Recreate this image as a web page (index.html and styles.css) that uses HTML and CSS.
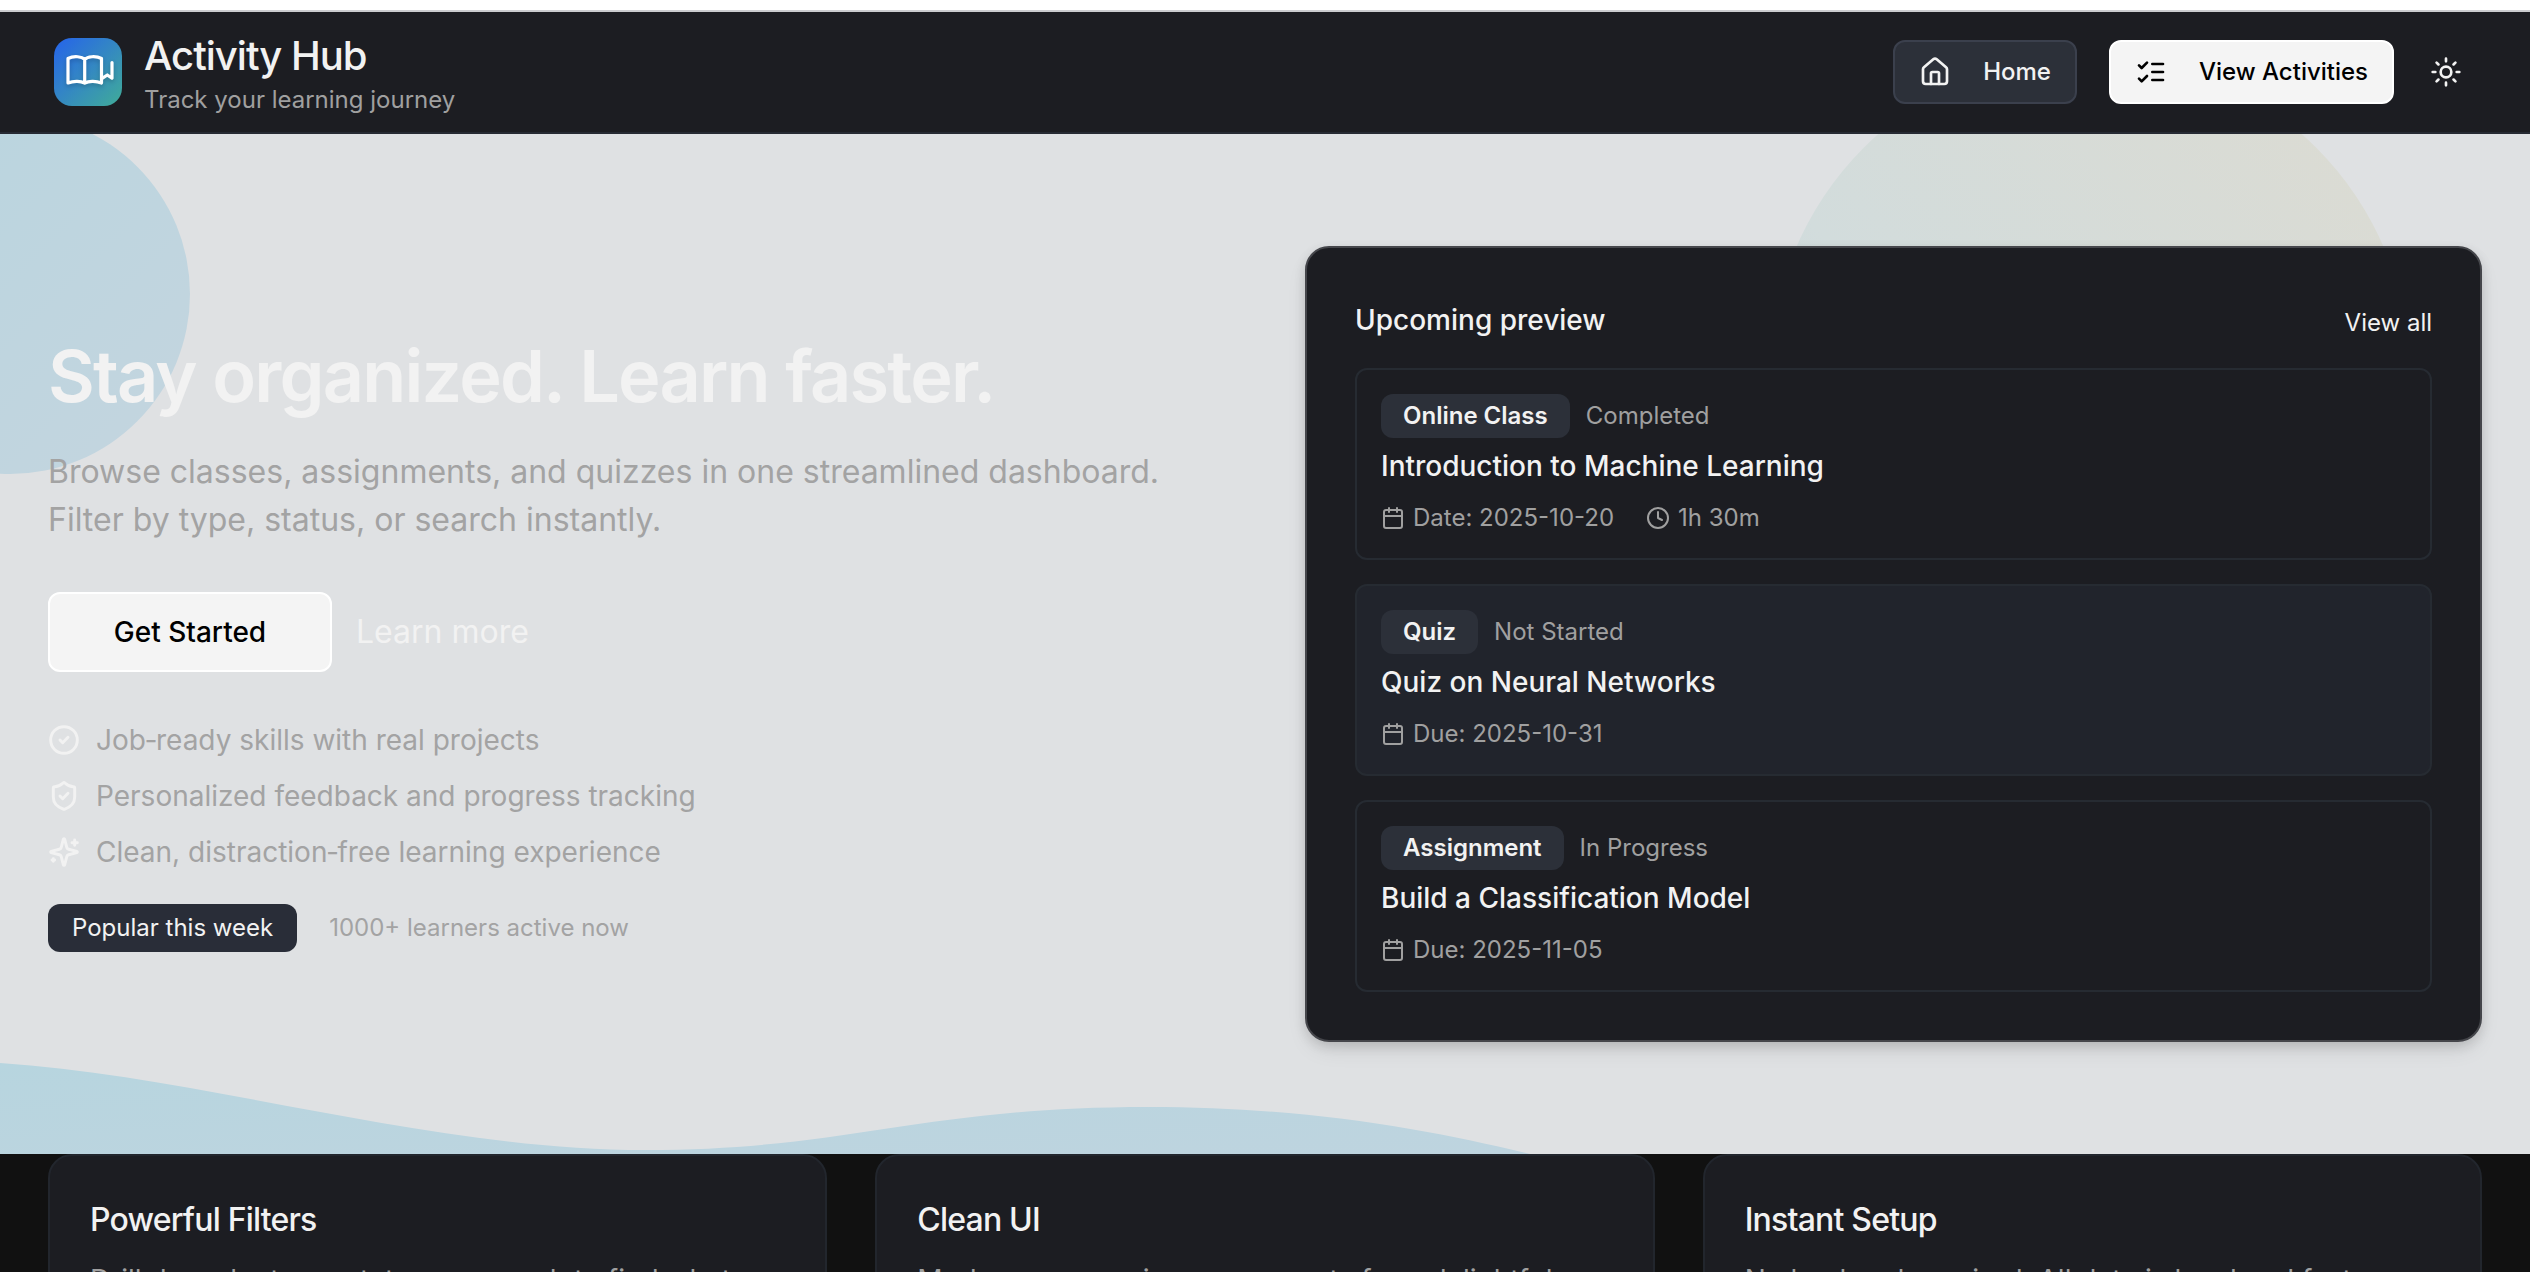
FILE: index.html
```html
<!DOCTYPE html>
<html lang="en">
<head>
<meta charset="utf-8">
<title>Activity Hub</title>
<link rel="stylesheet" href="styles.css">
</head>
<body>
<svg class="defs" width="0" height="0" aria-hidden="true">
  <symbol id="calendar" viewBox="0 0 24 24"><path d="M8 2v4M16 2v4"/><rect x="3" y="4" width="18" height="18" rx="2"/><path d="M3 10h18"/></symbol>
</svg>
<div class="page">
  <header class="topbar">
    <div class="brand">
      <div class="logo">
        <svg class="logo-icon" viewBox="0 0 68 68"><path d="M30.700 21.500C28 18.500 20 17.500 14 20.500V45C20 42.500 27 43 30.700 45.200C34.500 43 41.500 42.500 47.500 45V20.500C41.500 17.500 33.500 18.500 30.700 21.500V45"/><path d="M48.500 40.200L53.300 37L58 40.200V24.500"/></svg>
      </div>
      <div class="brand-text">
        <div class="brand-name">Activity Hub</div>
        <div class="brand-tag">Track your learning journey</div>
      </div>
    </div>
    <nav class="nav">
      <a class="btn btn-secondary"><svg class="icon" viewBox="0 0 24 24"><path d="M15 21v-8a1 1 0 0 0-1-1h-4a1 1 0 0 0-1 1v8"/><path d="M3 10a2 2 0 0 1 .709-1.528l7-5.999a2 2 0 0 1 2.582 0l7 5.999A2 2 0 0 1 21 10v9a2 2 0 0 1-2 2H5a2 2 0 0 1-2-2z"/></svg><span>Home</span></a>
      <a class="btn btn-primary"><svg class="icon" viewBox="0 0 24 24"><path d="m3 17 2 2 4-4"/><path d="m3 7 2 2 4-4"/><path d="M13 6h8"/><path d="M13 12h8"/><path d="M13 18h8"/></svg><span>View Activities</span></a>
      <a class="theme"><svg class="icon" viewBox="0 0 24 24"><circle cx="12" cy="12" r="4"/><path d="M12 2v2M12 20v2M4.930 4.930l1.410 1.410M17.660 17.660l1.410 1.410M2 12h2M20 12h2M6.340 17.660l-1.410 1.410M19.070 4.930l-1.410 1.410"/></svg></a>
    </nav>
  </header>

  <section class="hero">
    <svg class="hero-art" viewBox="0 0 2530 1020" preserveAspectRatio="none">
      <defs>
        <linearGradient id="blue" x1="0" y1="0" x2="1" y2="1"><stop offset="0" stop-color="#b8d5df"/><stop offset="1" stop-color="#c4d5df"/></linearGradient>
        <linearGradient id="sand" x1="0" y1="1" x2="1" y2="0"><stop offset="0" stop-color="#c5d6e2"/><stop offset=".4" stop-color="#d2dcdc"/><stop offset="1" stop-color="#dddbd1"/></linearGradient>
        <linearGradient id="wave" x1="0" y1="0" x2="1" y2="1"><stop offset="0" stop-color="#b7d5df"/><stop offset="1" stop-color="#bed4df"/></linearGradient>
      </defs>
      <circle cx="10" cy="160" r="180" fill="url(#blue)"/>
      <circle cx="2090" cy="240" r="320" fill="url(#sand)"/>
      <path d="M0 929C200 942 430 1016 645 1016C850 1016 920 973 1148 973C1310 973 1430 996 1530 1020H0Z" fill="url(#wave)"/>
    </svg>
    <div class="intro">
      <h1>Stay organized. Learn faster.</h1>
      <p class="lead">Browse classes, assignments, and quizzes in one streamlined dashboard.<br>Filter by type, status, or search instantly.</p>
      <div class="actions"><a class="start">Get Started</a><a class="more">Learn more</a></div>
      <ul class="points">
        <li><svg class="icon" viewBox="0 0 24 24"><circle cx="12" cy="12" r="10"/><path d="m9 12 2 2 4-4"/></svg>Job‑ready skills with real projects</li>
        <li><svg class="icon" viewBox="0 0 24 24"><path d="M20 13c0 5-3.500 7.500-7.660 8.950a1 1 0 0 1-.67-.01C7.500 20.500 4 18 4 13V6a1 1 0 0 1 1-1c2 0 4.500-1.200 6.240-2.720a1.170 1.170 0 0 1 1.520 0C14.510 3.810 17 5 19 5a1 1 0 0 1 1 1z"/><path d="m9 12 2 2 4-4"/></svg>Personalized feedback and progress tracking</li>
        <li><svg class="icon" viewBox="0 0 24 24"><path d="M9.937 15.500A2 2 0 0 0 8.500 14.063l-6.135-1.582a.5.5 0 0 1 0-.962L8.500 9.936A2 2 0 0 0 9.937 8.500l1.582-6.135a.5.5 0 0 1 .963 0L14.063 8.500A2 2 0 0 0 15.500 9.937l6.135 1.581a.5.5 0 0 1 0 .964L15.500 14.063a2 2 0 0 0-1.437 1.437l-1.582 6.135a.5.5 0 0 1-.963 0z"/><path d="M20 3v4M22 5h-4M4 17v2M5 18H3"/></svg>Clean, distraction‑free learning experience</li>
      </ul>
      <div class="popular"><span class="popular-tag">Popular this week</span><span>1000+ learners active now</span></div>
    </div>

    <div class="preview">
      <div class="preview-head"><h2>Upcoming preview</h2><a>View all</a></div>
      <div class="items">
        <article class="item">
          <div class="item-top"><span class="tag">Online Class</span><span>Completed</span></div>
          <h3>Introduction to Machine Learning</h3>
          <div class="meta"><span><svg class="icon"><use href="#calendar"/></svg>Date: 2025-10-20</span><span><svg class="icon" viewBox="0 0 24 24"><circle cx="12" cy="12" r="10"/><path d="M12 6v6l4 2"/></svg>1h 30m</span></div>
        </article>
        <article class="item item-active">
          <div class="item-top"><span class="tag">Quiz</span><span>Not Started</span></div>
          <h3>Quiz on Neural Networks</h3>
          <div class="meta"><span><svg class="icon"><use href="#calendar"/></svg>Due: 2025-10-31</span></div>
        </article>
        <article class="item">
          <div class="item-top"><span class="tag">Assignment</span><span>In Progress</span></div>
          <h3>Build a Classification Model</h3>
          <div class="meta"><span><svg class="icon"><use href="#calendar"/></svg>Due: 2025-11-05</span></div>
        </article>
      </div>
    </div>
  </section>

  <section class="features">
    <div class="feature"><h2>Powerful Filters</h2><p>Drill down by type, status, or search to find what</p></div>
    <div class="feature"><h2>Clean UI</h2><p>Modern, responsive components for a delightful</p></div>
    <div class="feature"><h2>Instant Setup</h2><p>No backend required. All data is local and fast.</p></div>
  </section>
</div>
</body>
</html>
```
FILE: styles.css
```css
* { box-sizing: border-box; }
html, body { height: 100%; }
body { margin: 0; overflow: hidden; background: #fff; color: #f2f2f2; font-family: Inter, sans-serif; font-size: 24px; }
h1, h2, h3, p, ul { margin: 0; padding: 0; }
.defs { position: absolute; }
.icon { flex: none; width: 32px; height: 32px; fill: none; stroke: currentColor; stroke-width: 2; stroke-linecap: round; stroke-linejoin: round; }

.page { width: 2530px; height: 1272px; padding-top: 10px; display: flex; flex-direction: column; overflow: hidden; }

.topbar { height: 124px; flex: none; display: flex; align-items: center; justify-content: space-between; padding: 0 68px 0 54px; background: #1c1d22; border-top: 2px solid #cbcccf; border-bottom: 2px solid #262a33; }
.brand { display: flex; align-items: center; gap: 22px; }
.brand-text { padding-top: 4px; }
.logo { width: 68px; height: 68px; border-radius: 18px; background: linear-gradient(135deg, #2563eb, #3488c2 50%, #40ac98); }
.logo-icon { display: block; width: 68px; height: 68px; fill: none; stroke: #fff; stroke-width: 3.2; stroke-linecap: round; stroke-linejoin: round; filter: drop-shadow(0 2px 2px rgba(0, 0, 0, .2)); }
.brand-name { font-size: 40px; line-height: 50px; font-weight: 500; letter-spacing: -1px; }
.brand-tag { margin-bottom: -1px; padding-top: 1px; font-size: 24px; line-height: 36px; color: #a0a0a0; }
.nav { display: flex; align-items: center; }
.btn { height: 64px; display: flex; align-items: center; gap: 32px; padding: 0 24px; border: 2px solid; border-radius: 12px; font-weight: 500; }
.btn span { padding-bottom: 2px; }
.btn-secondary { margin-right: 32px; background: #2c3039; border-color: #3b404d; }
.btn-primary { margin-right: 36px; background: #f4f4f4; border-color: #fff; color: #000; }
.theme { display: flex; }

.hero { position: relative; height: 1020px; flex: none; display: grid; grid-template-columns: 1177px 1177px; gap: 80px; align-items: center; padding: 0 48px; background: #dfe1e3; }
.hero-art { position: absolute; inset: 0; width: 100%; height: 100%; }
.intro, .preview { position: relative; }
.intro { padding-bottom: 4px; }
h1 { font-size: 72px; line-height: 88px; font-weight: 600; letter-spacing: -1.8px; }
.lead { margin-top: 28px; font-size: 32px; line-height: 48px; color: #a3a3a3; }
.actions { margin-top: 48px; display: flex; align-items: center; gap: 24px; }
.start { width: 284px; height: 80px; display: flex; align-items: center; justify-content: center; border: 2px solid #fff; border-radius: 12px; background: #f4f4f4; color: #000; font-size: 28px; font-weight: 500; }
.more { font-size: 32px; line-height: 36px; }
.points { margin-top: 40px; list-style: none; font-size: 28px; color: #a3a3a3; }
.points li { display: flex; align-items: center; gap: 16px; height: 56px; }
.points .icon { color: #f2f2f2; stroke-width: 2.2; }
.popular { margin-top: 24px; display: flex; align-items: center; gap: 32px; color: #a3a3a3; }
.popular > span { padding-bottom: 1px; }
.popular .popular-tag { height: 48px; line-height: 47px; padding: 0 24px; border-radius: 12px; background: #292d38; color: #f2f2f2; }

.preview { height: 796px; padding: 48px 48px 0; background: #1c1d22; border: 2px solid #45464b; border-radius: 24px; box-shadow: 0 4px 12px rgba(0, 0, 0, .12), 0 10px 24px -6px rgba(0, 0, 0, .12); }
.preview-head { display: flex; align-items: center; justify-content: space-between; height: 48px; }
.preview-head h2 { font-size: 28px; font-weight: 500; }
.preview-head a { margin-top: 4px; }
.items { margin-top: 24px; display: grid; gap: 24px; }
.item { height: 192px; padding: 24px; border: 2px solid #262b32; border-radius: 12px; }
.item-active { background: #21242c; }
.item-top { display: flex; align-items: center; gap: 16px; line-height: 43px; height: 44px; color: #a0a0a0; }
.item-top > span { height: 44px; }
.tag { padding: 0 22px; border-radius: 12px; background: #2c3039; color: #f2f2f2; font-weight: 600; }
.item h3 { margin-top: 6px; font-size: 28px; line-height: 44px; font-weight: 500; }
.meta { margin-top: 12px; display: flex; gap: 32px; line-height: 36px; color: #a0a0a0; }
.meta span { display: flex; align-items: center; gap: 8px; }
.meta .icon { width: 24px; height: 24px; }

.features { flex: 1; min-height: 0; display: grid; grid-template-columns: repeat(3, 1fr); gap: 48px; padding: 0 48px; background: #111; overflow: hidden; }
.feature { height: 220px; padding: 40px; background: #1c1d22; border: 2px solid #22262d; border-radius: 24px; }
.feature h2 { font-size: 32px; line-height: 47px; font-weight: 500; letter-spacing: -.8px; }
.feature p { margin-top: 16px; font-size: 28px; line-height: 42px; color: #a0a0a0; white-space: nowrap; }
```
